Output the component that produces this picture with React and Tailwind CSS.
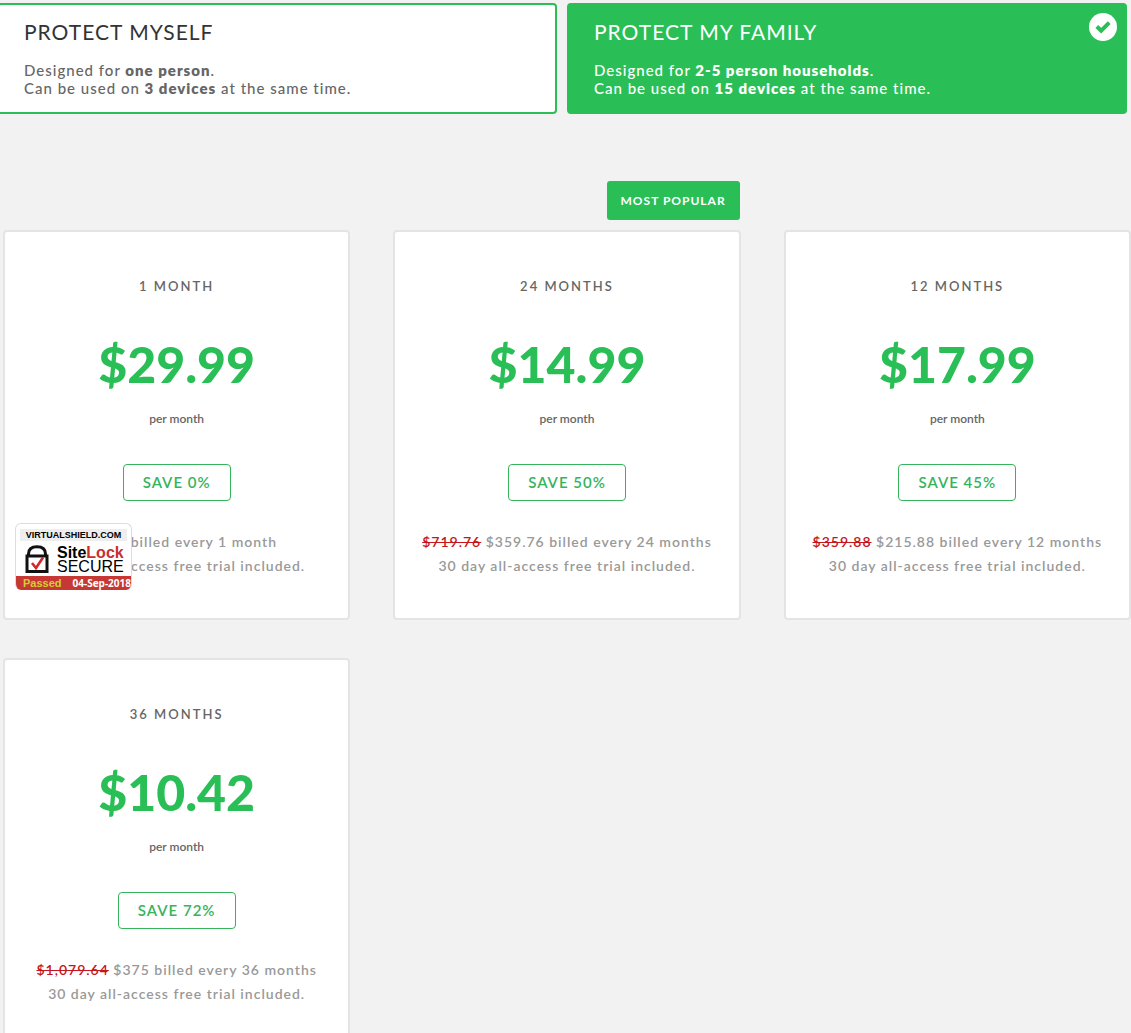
import { useState } from 'react';

const audiences = [
  {
    id: 'myself',
    title: 'PROTECT MYSELF',
    people: 'one person',
    devices: '3 devices',
  },
  {
    id: 'family',
    title: 'PROTECT MY FAMILY',
    people: '2-5 person households',
    devices: '15 devices',
  },
];

const plans = [
  { term: '1 MONTH', price: '$29.99', save: 'SAVE 0%', total: '$29.99', every: '1 month', seal: true },
  { term: '24 MONTHS', price: '$14.99', save: 'SAVE 50%', was: '$719.76', total: '$359.76', every: '24 months', popular: true },
  { term: '12 MONTHS', price: '$17.99', save: 'SAVE 45%', was: '$359.88', total: '$215.88', every: '12 months' },
  { term: '36 MONTHS', price: '$10.42', save: 'SAVE 72%', was: '$1,079.64', total: '$375', every: '36 months' },
];

function AudienceCard({ audience, selected, onSelect }) {
  return (
    <button
      type="button"
      aria-pressed={selected}
      onClick={onSelect}
      className={`relative flex flex-col items-start rounded border-2 border-[#29bf56] px-[25px] pt-3 pb-[15px] text-left ${
        selected ? 'bg-[#29bf56] text-white' : 'bg-white text-[#666]'
      }`}
    >
      <span className={`mb-[14px] text-[21px] leading-[30px] tracking-[1px] ${selected ? 'text-white' : 'text-[#333]'}`}>
        {audience.title}
      </span>
      <span className="text-[15px] leading-[18px] font-medium tracking-[1px]">
        Designed for <strong className="font-extrabold">{audience.people}</strong>.
        <br />
        Can be used on <strong className="font-extrabold">{audience.devices}</strong> at the same time.
      </span>
      {selected && (
        <span className="absolute top-2 right-2 flex size-7 items-center justify-center rounded-full bg-white">
          <svg viewBox="0 0 16 14" className="h-[14px] w-4" fill="none" stroke="#29bf56" strokeWidth="4">
            <path d="M1.8 6.5 L6.2 10.7 L14.2 2.7" />
          </svg>
        </span>
      )}
    </button>
  );
}

function SiteLockSeal() {
  return (
    <a
      href="#sitelock"
      className="absolute bottom-7 left-[10px] flex w-[117px] flex-col overflow-hidden rounded-md border border-b-0 border-[#ddd] bg-white text-left font-['Liberation_Sans',sans-serif] whitespace-nowrap text-black"
    >
      <span className="mx-1 mt-[5px] bg-[#eee] text-center text-[9px] leading-3 font-bold">VIRTUALSHIELD.COM</span>
      <span className="flex h-[35px] items-center gap-2 pl-[9px]">
        <svg viewBox="0 0 24 28" className="h-7 w-6 shrink-0" fill="none">
          <path d="M3.5 11 V9 C3.5 4 7 1.7 12 1.7 S20.5 4 20.5 9 V11" stroke="#111" strokeWidth="3" />
          <rect x="2" y="11" width="20" height="15.5" stroke="#111" strokeWidth="3" />
          <path d="M7 18 L11 23 L18 12.5" stroke="#d1282e" strokeWidth="2.6" />
        </svg>
        <span className="flex flex-col pt-[2px]">
          <span className="text-base leading-[14px] font-bold">
            Site<span className="text-[#c9302c]">Lock</span>
          </span>
          <span className="text-base leading-[14px]">SECURE</span>
        </span>
      </span>
      <span className="flex h-[14px] items-center justify-between bg-[#c63833] pl-[7px] text-[10px] font-bold text-white">
        <span className="text-[11px] text-[#d2cf34]">Passed</span>
        <span className="font-['Open_Sans',sans-serif]">04-Sep-2018</span>
      </span>
    </a>
  );
}

function PlanCard({ plan }) {
  return (
    <article className="relative flex flex-col items-center rounded border-2 border-[#e4e4e4] bg-white pt-11 pb-10 text-center">
      {plan.popular && (
        <span className="absolute -top-[51px] -right-[1px] rounded-[3px] bg-[#29bf56] px-[14px] text-xs leading-[39px] font-bold tracking-[1px] text-white">
          MOST POPULAR
        </span>
      )}
      <h2 className="text-[13px] leading-5 font-semibold tracking-[2px] text-[#666]">{plan.term}</h2>
      <p className="mt-9 text-[50px] leading-[64px] font-black text-[#29bf56]">{plan.price}</p>
      <p className="mt-[13px] text-xs leading-5 font-semibold text-[#666]">per month</p>
      <button
        type="button"
        className="mt-[35px] rounded border border-[#35b45c] px-[19px] text-[15px] leading-[35px] font-semibold tracking-[1px] text-[#35b45c]"
      >
        {plan.save}
      </button>
      <p className="mt-[29px] text-sm leading-6 font-semibold tracking-[1px] text-[#999]">
        {plan.was && <del className="text-[#c4161c]">{plan.was}</del>} {plan.total} billed every {plan.every}
        <br />
        30 day all-access free trial included.
      </p>
      {plan.seal && <SiteLockSeal />}
    </article>
  );
}

export default function App() {
  const [selected, setSelected] = useState('family');

  return (
    <main className="min-h-screen overflow-hidden bg-[#f2f2f2] pt-[3px] pb-10 font-['Lato',sans-serif]">
      <section className="mr-1 -ml-[3px] grid grid-cols-2 gap-[10px]">
        {audiences.map((audience) => (
          <AudienceCard
            key={audience.id}
            audience={audience}
            selected={audience.id === selected}
            onSelect={() => setSelected(audience.id)}
          />
        ))}
      </section>
      <section className="mt-[116px] ml-[3px] grid grid-cols-3 gap-x-[43px] gap-y-[38px]">
        {plans.map((plan) => (
          <PlanCard key={plan.term} plan={plan} />
        ))}
      </section>
    </main>
  );
}
